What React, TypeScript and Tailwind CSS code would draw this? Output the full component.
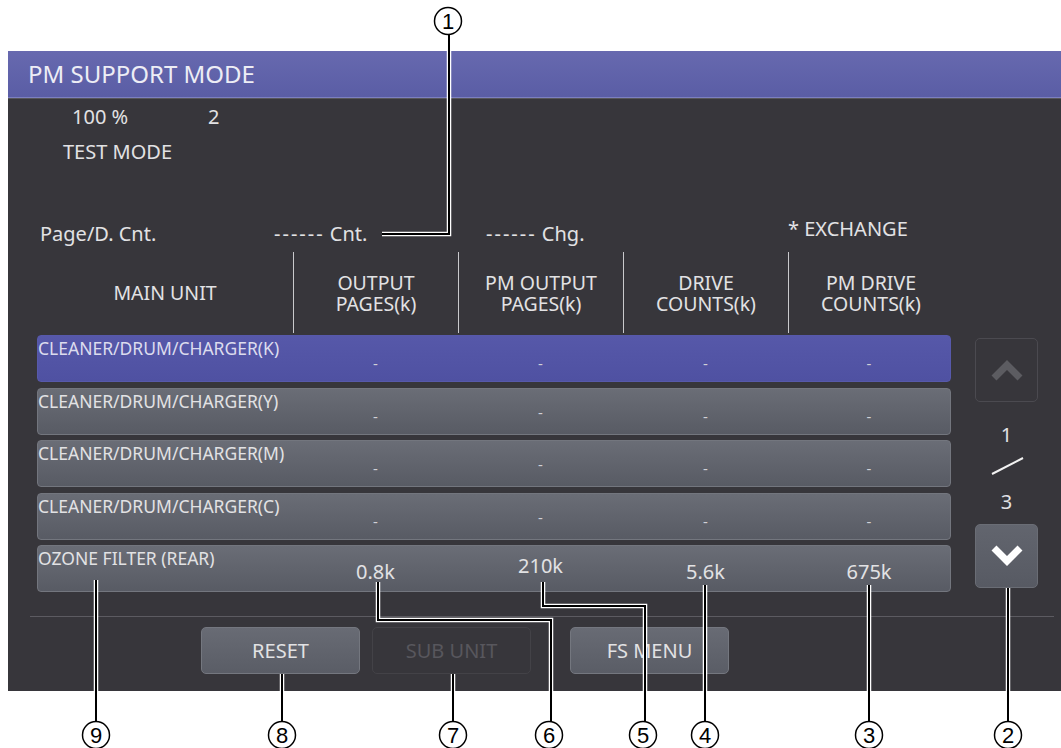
import React from "react";

interface RowData {
  name: string;
  values: string[];
  active?: boolean;
}

const rows: RowData[] = [
  { name: "CLEANER/DRUM/CHARGER(K)", values: ["-", "-", "-", "-"], active: true },
  { name: "CLEANER/DRUM/CHARGER(Y)", values: ["-", "-", "-", "-"] },
  { name: "CLEANER/DRUM/CHARGER(M)", values: ["-", "-", "-", "-"] },
  { name: "CLEANER/DRUM/CHARGER(C)", values: ["-", "-", "-", "-"] },
  { name: "OZONE FILTER (REAR)", values: ["0.8k", "210k", "5.6k", "675k"] },
];

const headers = [
  ["OUTPUT", "PAGES(k)"],
  ["PM OUTPUT", "PAGES(k)"],
  ["DRIVE", "COUNTS(k)"],
  ["PM DRIVE", "COUNTS(k)"],
];

// callout leader lines, drawn over the screen
const leaders = [
  "M449 35 V234 H382",
  "M96 580 V722",
  "M282 674 V722",
  "M453 674 V722",
  "M378 582 V620 H551 V722",
  "M543 582 V606 H645 V722",
  "M705 585 V722",
  "M869 585 V722",
  "M1008 588 V722",
];

const circles = [
  { n: "1", x: 448, y: 21 },
  { n: "9", x: 96, y: 735 },
  { n: "8", x: 282, y: 735 },
  { n: "7", x: 453, y: 735 },
  { n: "6", x: 549, y: 735 },
  { n: "5", x: 643, y: 735 },
  { n: "4", x: 705, y: 735 },
  { n: "3", x: 869, y: 735 },
  { n: "2", x: 1008, y: 735 },
];

const Row: React.FC<{ row: RowData }> = ({ row }) => (
  <div
    className={`grid h-[47px] grid-cols-[255px_165px_165px_165px_162px] rounded-[4px] border ${
      row.active
        ? "border-[#5759ab] bg-linear-to-b from-[#5658a9] to-[#4f51a2] text-[#dcdcee]"
        : "border-[#73767e] bg-linear-to-b from-[#6a6d76] to-[#585b64] text-[#e2e2e4]"
    }`}
  >
    <div className="pt-[2px] text-[17.5px] leading-[21px] whitespace-nowrap">{row.name}</div>
    {row.values.map((v, i) => {
      const dash = v === "-";
      const lift = i === 1 && !row.active;
      return (
        <div
          key={i}
          className={`text-center ${
            dash ? "text-[15px] leading-[14px] text-[#d0d1d6]" : "text-[20px] leading-[22px]"
          } ${
            dash ? (lift ? "pt-[16px]" : "pt-[20px]") : lift ? "pt-[9px]" : "pt-[15px]"
          }`}
        >
          {v}
        </div>
      );
    })}
  </div>
);

const Chevron: React.FC<{ up?: boolean; color: string }> = ({ up, color }) => (
  <svg width="34" height="24" viewBox="0 0 34 24">
    <polyline
      points={up ? "4,20 17,7 30,20" : "4,4 17,17 30,4"}
      fill="none"
      stroke={color}
      strokeWidth="7"
      strokeLinejoin="miter"
    />
  </svg>
);

export default function App() {
  return (
    <div className="relative h-[748px] w-[1061px] overflow-hidden bg-white font-['Noto_Sans',sans-serif]">
      <div className="ml-[8px] mt-[51px] flex h-[640px] w-[1053px] flex-col bg-[#37363b] text-[#e2e2e4]">
        <div className="h-[47px] border-b border-[#7c7fc0] bg-linear-to-b from-[#6769af] to-[#5a5da5] pl-[20px] text-[24px] leading-[46px] text-[#ededf5]">
          PM SUPPORT MODE
        </div>
        <div className="h-px bg-[#56555a]" />

        <div className="h-[109px] pt-[7px] text-[20px] leading-[22px]">
          <div className="flex">
            <span className="ml-[64px] w-[136px]">100 %</span>
            <span>2</span>
          </div>
          <div className="ml-[55px] mt-[13px]">TEST MODE</div>
        </div>

        <div className="flex h-[44px] items-start pl-[32px] pt-[15px] text-[20px] leading-[22px]">
          <span className="w-[234px]">Page/D. Cnt.</span>
          <span className="w-[212px]">
            <span className="tracking-[2px]">------</span> Cnt.
          </span>
          <span className="w-[302px]">
            <span className="tracking-[2px]">------</span> Chg.
          </span>
          <span className="-mt-[5px]">* EXCHANGE</span>
        </div>

        <div className="ml-[29px] grid h-[81px] grid-cols-[256px_165px_165px_165px_165px] text-[19.5px]">
          <div className="flex items-center justify-center">MAIN UNIT</div>
          {headers.map((h) => (
            <div
              key={h[0]}
              className="flex flex-col items-center justify-center border-l border-[#c9c9cc] pt-[1px]"
            >
              <div className="leading-[22px]">{h[0]}</div>
              <div className="leading-[20px]">{h[1]}</div>
            </div>
          ))}
        </div>

        <div className="ml-[29px] mt-[2px] flex">
          <div className="flex w-[914px] flex-col gap-[5.5px]">
            {rows.map((r) => (
              <Row key={r.name} row={r} />
            ))}
          </div>
          <div className="ml-[24px] flex w-[63px] flex-col items-center pt-[3px] text-[20px] leading-[20px]">
            <div className="flex h-[64px] w-[63px] items-center justify-center rounded-[5px] border border-[#4b4a50]">
              <Chevron up color="#5c5c61" />
            </div>
            <div className="mt-[23px]">1</div>
            <svg className="mt-[11px]" width="34" height="20" viewBox="0 0 34 20">
              <line x1="2" y1="18" x2="33" y2="2" stroke="#f2f2f2" strokeWidth="2" />
            </svg>
            <div className="mt-[16px]">3</div>
            <div className="mt-[12px] flex h-[64px] w-[63px] items-center justify-center rounded-[5px] border border-[#6a6d75] bg-linear-to-b from-[#62656e] to-[#575a63]">
              <Chevron color="#ffffff" />
            </div>
          </div>
        </div>

        <div className="ml-[22px] mr-[7px] mt-[24px] h-px bg-[#5c5b61]" />

        <div className="mt-[10px] flex text-[20px]">
          <button className="ml-[193px] h-[47px] w-[159px] rounded-[5px] border border-[#74777f] bg-linear-to-b from-[#686b74] to-[#5a5d66] text-[#e2e2e4]">
            RESET
          </button>
          <button className="ml-[12px] h-[47px] w-[159px] rounded-[5px] border border-[#434247] text-[#58575d]">
            SUB UNIT
          </button>
          <button className="ml-[39px] h-[47px] w-[159px] rounded-[5px] border border-[#74777f] bg-linear-to-b from-[#686b74] to-[#5a5d66] text-[#e2e2e4]">
            FS MENU
          </button>
        </div>
      </div>

      <svg className="pointer-events-none absolute left-0 top-0" width="1061" height="748">
        {leaders.map((d) => (
          <g key={d} fill="none">
            <path d={d} stroke="#ffffff" strokeWidth="4.5" />
            <path d={d} stroke="#000000" strokeWidth="2" />
          </g>
        ))}
        {circles.map((c) => (
          <g key={c.n}>
            <circle cx={c.x} cy={c.y} r="13.5" fill="#ffffff" stroke="#000000" strokeWidth="1.5" />
            <text
              x={c.x}
              y={c.y + 8}
              textAnchor="middle"
              fontSize="22"
              fontFamily="'Liberation Sans', Arial, sans-serif"
              fill="#000000"
            >
              {c.n}
            </text>
          </g>
        ))}
      </svg>
    </div>
  );
}
